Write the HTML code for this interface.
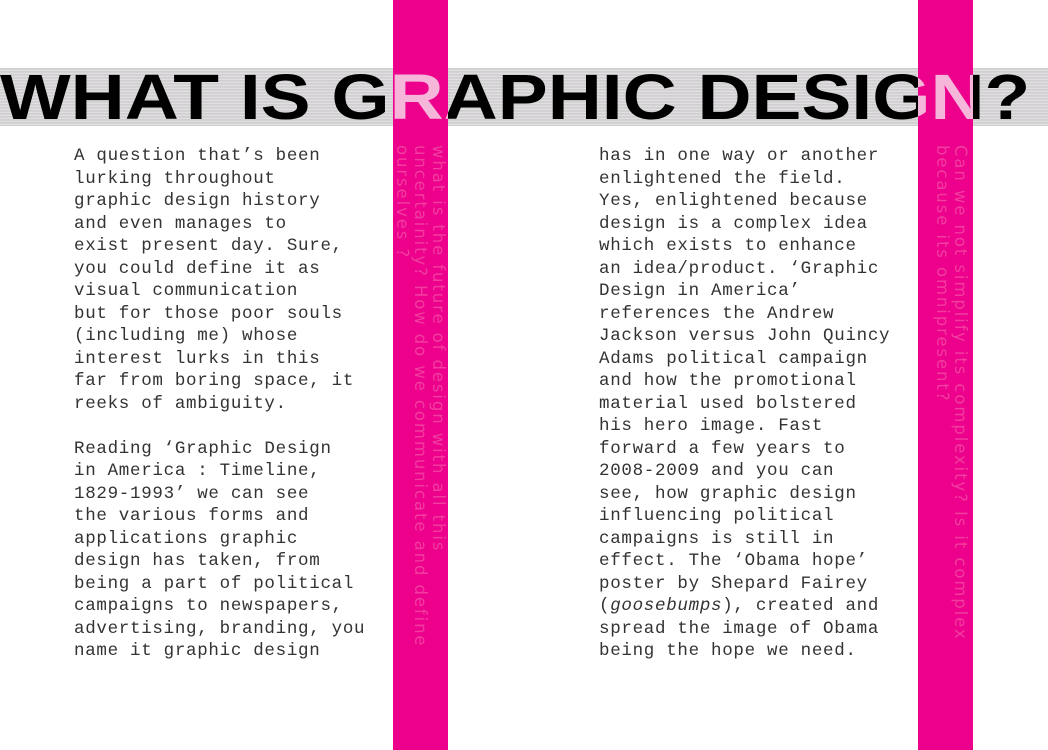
<!DOCTYPE html>
<html><head><meta charset="utf-8"><style>
html,body{margin:0;padding:0;background:#fff;width:1048px;height:750px;overflow:hidden;position:relative;font-family:"Liberation Mono",monospace}
.bar{position:absolute;top:0;height:750px;width:55px;background:#ec008c}
.band{position:absolute;left:0;top:68px;width:1048px;height:58px;background:repeating-linear-gradient(0deg,#cfcfcf 0 1px,#e2dfe2 1px 2px,#d6d3d6 2px 3px)}
.title{position:absolute;left:0;top:0;width:1100px;height:58px;line-height:58px;font-family:"Liberation Sans",sans-serif;font-weight:bold;font-size:64px;white-space:nowrap;color:#000;letter-spacing:0px;transform:scaleX(1.17);transform-origin:0 0}
.tw{position:absolute;top:68px;height:58px;overflow:hidden}
.col{position:absolute;top:145px;font-size:17.5px;line-height:22.5px;color:#333;white-space:pre;letter-spacing:0.7px}
.vt{position:absolute;top:145px;writing-mode:vertical-rl;font-family:"DejaVu Sans",sans-serif;font-size:16.5px;line-height:18px;color:#f23c9f;white-space:pre;letter-spacing:1.9px}
</style></head><body>
<div class="band"></div>
<div class="tw" style="left:0;width:1048px"><div class="title">WHAT IS GRAPHIC DESIGN?</div></div>
<div class="bar" style="left:393px"></div>
<div class="bar" style="left:918px"></div>
<div class="tw" style="left:393px;width:55px"><div class="title" style="left:-393px;color:#f6b6da">WHAT IS GRAPHIC DESIGN?</div></div>
<div class="tw" style="left:918px;width:55px"><div class="title" style="left:-918px;color:#f6b6da">WHAT IS GRAPHIC DESIGN?</div></div>
<div class="col" style="left:74px">A question that’s been
lurking throughout
graphic design history
and even manages to
exist present day. Sure,
you could define it as
visual communication
but for those poor souls
(including me) whose
interest lurks in this
far from boring space, it
reeks of ambiguity.

Reading ‘Graphic Design
in America : Timeline,
1829-1993’ we can see
the various forms and
applications graphic
design has taken, from
being a part of political
campaigns to newspapers,
advertising, branding, you
name it graphic design</div>
<div class="col" style="left:599px">has in one way or another
enlightened the field.
Yes, enlightened because
design is a complex idea
which exists to enhance
an idea/product. ‘Graphic
Design in America’
references the Andrew
Jackson versus John Quincy
Adams political campaign
and how the promotional
material used bolstered
his hero image. Fast
forward a few years to
2008-2009 and you can
see, how graphic design
influencing political
campaigns is still in
effect. The ‘Obama hope’
poster by Shepard Fairey
(<i>goosebumps</i>), created and
spread the image of Obama
being the hope we need.</div>
<div class="vt" style="left:393px">what is the future of design with all this
uncertainity? How do we communicate and define
ourselves ?</div>
<div class="vt" style="left:933px">Can we not simplify its complexity? Is it complex
because its omnipresent?</div>
</body></html>
